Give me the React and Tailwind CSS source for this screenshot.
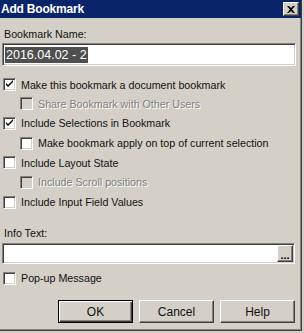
import React from "react";

const sunken =
  "border border-t-[#808080] border-l-[#808080] border-r-white border-b-white shadow-[inset_1px_1px_0_#404040,inset_-1px_-1px_0_#d4d0c8]";
const raised =
  "border border-t-white border-l-white border-r-[#404040] border-b-[#404040] shadow-[inset_-1px_-1px_0_#808080]";

function Check({ checked, disabled }) {
  return (
    <div
      className={`w-[13px] h-[13px] shrink-0 relative ${sunken} ${disabled ? "bg-[#d4d0c8]" : "bg-white"}`}
    >
      {checked && (
        <svg width="11" height="11" viewBox="0 0 11 11" className="absolute left-0 top-0">
          <path d="M2 4 L2 6 L4 8 L9 3 L9 1 L4 6 Z" fill="#000" />
        </svg>
      )}
    </div>
  );
}

function Row({ label, checked, disabled, indent, h }) {
  return (
    <div className={`flex items-center ${h} ${indent ? "pl-[20px]" : "pl-[3px]"}`}>
      <Check checked={checked} disabled={disabled} />
      <span
        className={`ml-[5px] text-[10.7px] leading-[14px] ${
          disabled ? "text-[#808080] [text-shadow:1px_1px_0_#fff]" : "text-[#111]"
        }`}
      >
        {label}
      </span>
    </div>
  );
}

function Btn({ children, def }) {
  return (
    <div
      className={`w-[75px] h-[23px] flex items-center justify-center text-[12px] text-[#111] ${
        def
          ? "border border-black shadow-[inset_1px_1px_0_#fff,inset_-1px_-1px_0_#404040,inset_-2px_-2px_0_#808080]"
          : raised
      }`}
    >
      {children}
    </div>
  );
}

export default function App() {
  return (
    <div className="w-[304px] h-[333px] bg-[#d4d0c8] font-['Liberation_Sans',Arial,sans-serif] overflow-hidden">
      <div className="w-[302px] h-[331px] border-r border-b border-r-[#404040] border-b-[#404040] shadow-[inset_-1px_-1px_0_#808080] flex flex-col">
        <div className="h-[18px] bg-[#0a246a] flex items-center justify-between pr-[2px]">
          <span className="text-white font-bold text-[12px] leading-[18px] pl-[1px] tracking-[-0.2px]">
            Add Bookmark
          </span>
          <div className={`w-[16px] h-[14px] bg-[#d4d0c8] flex items-center justify-center ${raised}`}>
            <svg width="8" height="7" viewBox="0 0 8 7">
              <path d="M0 0h2l2 2 2-2h2L5 3.5 8 7H6L4 5 2 7H0l3-3.5z" fill="#000" />
            </svg>
          </div>
        </div>

        <div className="flex flex-col pr-[5px]">
          <div className="mt-[9px] pl-[4px] text-[10.7px] leading-[14px] text-[#111]">Bookmark Name:</div>
          <div className={`mt-[2px] ml-[2px] h-[23px] bg-white flex items-center pl-[2px] ${sunken}`}>
            <span className="bg-[#4f4f4f] text-white text-[12.5px] leading-[16px] px-[1px]">2016.04.02 - 2</span>
          </div>

          <div className="mt-[9px] flex flex-col">
            <Row h="h-[19px]" checked label="Make this bookmark a document bookmark" />
            <Row h="h-[19px]" indent disabled label="Share Bookmark with Other Users" />
            <Row h="h-[20px]" checked label="Include Selections in Bookmark" />
            <Row h="h-[20px]" indent label="Make bookmark apply on top of current selection" />
            <Row h="h-[19px]" label="Include Layout State" />
            <Row h="h-[20px]" indent disabled label="Include Scroll positions" />
            <Row h="h-[20px]" label="Include Input Field Values" />
          </div>

          <div className="mt-[14px] pl-[4px] text-[10.7px] leading-[14px] text-[#111]">Info Text:</div>
          <div className={`mt-[3px] ml-[2px] mr-[1px] h-[21px] bg-white flex items-end justify-end pr-[1px] pb-[1px] ${sunken}`}>
            <div className={`w-[16px] h-[17px] bg-[#d4d0c8] flex items-end justify-center text-[11px] leading-[12px] font-bold ${raised}`}>
              ...
            </div>
          </div>

          <div className="mt-[4px]">
            <Row h="h-[20px]" label="Pop-up Message" />
          </div>

          <div className="mt-[12px] pr-[1px] flex justify-end gap-[6px]">
            <Btn def>OK</Btn>
            <Btn>Cancel</Btn>
            <Btn>Help</Btn>
          </div>
        </div>
      </div>
    </div>
  );
}
